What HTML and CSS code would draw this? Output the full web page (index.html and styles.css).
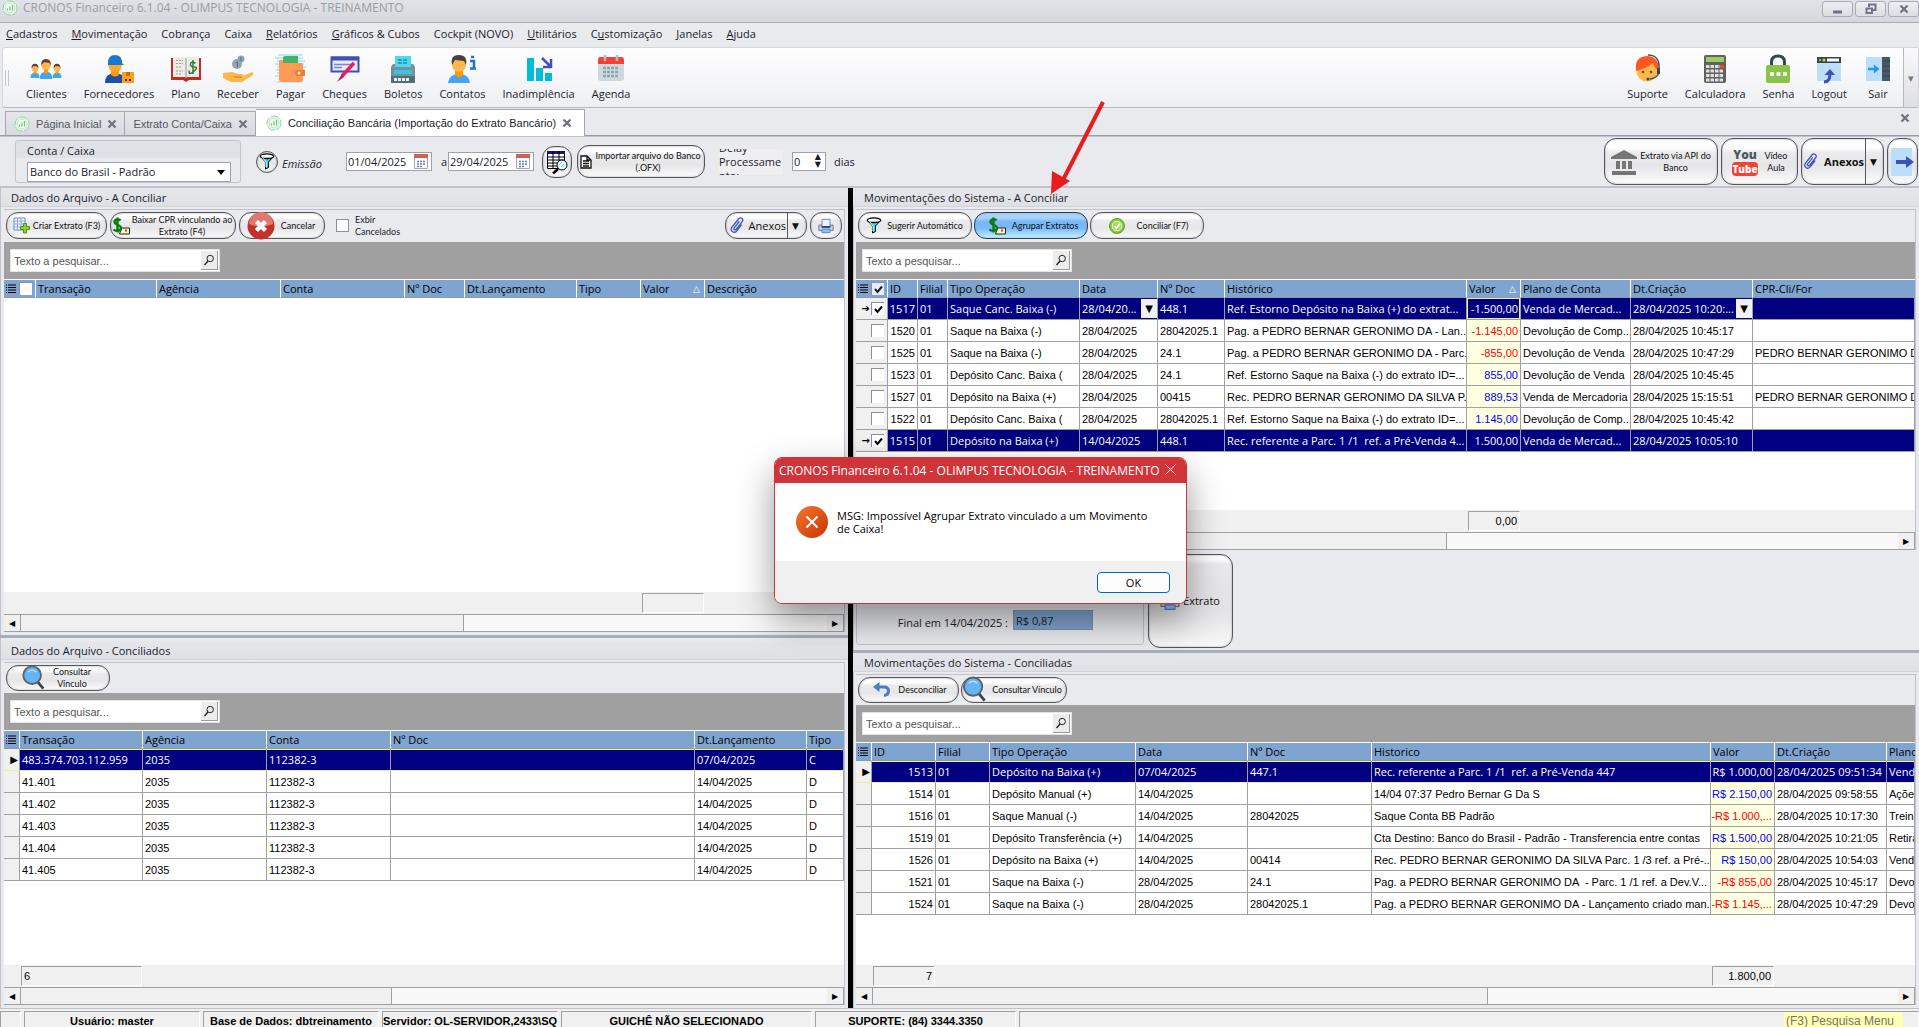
FILE: index.html
```
<!DOCTYPE html>
<html lang="pt-BR">
<head>
  <meta charset="UTF-8">
  <meta name="viewport" content="width=device-width, initial-scale=1.0">
  <title>CRONOS Financeiro 6.1.04 - OLIMPUS TECNOLOGIA - TREINAMENTO</title>
  <link rel="stylesheet" href="styles.css">
</head>
<body>
  <!-- shared icons -->
  <svg class="defs" width="0" height="0">
    <symbol id="logo" viewBox="0 0 16 16">
      <circle cx="8" cy="8" r="7" fill="#f2fbf3" stroke="#8fd49c" stroke-dasharray="9 1"/>
      <circle cx="8" cy="8" r="5" fill="none" stroke="#b9e4c1"/>
      <path d="M5.500 10.500v-2M8 10.500v-4M10.500 10.500V5" fill="none" stroke="#6cc47d" stroke-width="1.200"/>
    </symbol>
    <symbol id="lens" viewBox="0 0 12 12">
      <circle cx="7.200" cy="4.500" r="3.200" fill="none" stroke="#222"/>
      <path d="M5 7L1.500 11" stroke="#222" stroke-width="1.400"/>
    </symbol>
    <symbol id="cross" viewBox="0 0 10 10">
      <path d="M1.500 1.500l7 7M8.500 1.500l-7 7" stroke="#70717f" stroke-width="2.200"/>
    </symbol>
    <symbol id="bars" viewBox="0 0 10 10">
      <path d="M0 1h1M2 1h8M0 3.500h1M2 3.500h8M0 6h1M2 6h8M0 8.500h1M2 8.500h8" stroke="#000" stroke-width="1.200"/>
    </symbol>
    <symbol id="funnel" viewBox="0 0 16 18">
      <path d="M1.500 3.500L6.500 9v7l3-1.500V9l5-5.500z" fill="#20dfe8" stroke="#000"/>
      <ellipse cx="8" cy="3.200" rx="6.700" ry="2.300" fill="#fff" stroke="#000" stroke-width="1.300"/>
      <path d="M3.500 4.500L7 9v5" fill="none" stroke="#fff"/>
    </symbol>
    <symbol id="dollar" viewBox="0 0 18 18">
      <path d="M9.500 11h8v6h-10z" fill="#fff8c0" stroke="#222"/>
      <path d="M13 12.500h2v2h-2z" fill="#d33"/>
      <path d="M8.500 3.500C7 2 2.500 2 2.500 5s6.500 2.500 6.500 6-5.500 3.500-7.500 1.500M5.500.500v15" fill="none" stroke="#0a7a12" stroke-width="2.400"/>
    </symbol>
    <symbol id="clip" viewBox="0 0 16 18">
      <path d="M10.500 4.500L5 11.500c-1 1.500 1 3 2.200 1.500L13.500 5c2-2.800-1.800-5.600-4-2.900L2.500 11c-2.200 3.300 2 7 5 4l5.500-7" fill="none" stroke="#4356b8" stroke-width="1.400"/>
    </symbol>
    <symbol id="glass" viewBox="0 0 26 28">
      <path d="M16 17l7 8.500" stroke="#37474f" stroke-width="3"/>
      <circle cx="11" cy="11" r="9.500" fill="#64b5f6" stroke="#616161" stroke-width="2"/>
      <path d="M6.500 7.500q4.500-4 9 0" fill="none" stroke="#bbdefb" stroke-width="1.500"/>
    </symbol>
    <symbol id="calendar" viewBox="0 0 14 15">
      <path d="M.500.500h13v14H.500z" fill="#fff" stroke="#a0a6b8"/>
      <path d="M0 0h14v4H0z" fill="#d5604f"/>
      <path d="M3 7.500h8M3 10h8M3 12.500h5" stroke="#6677bb" stroke-width="1.500" stroke-dasharray="2 1"/>
    </symbol>
    <symbol id="printer" viewBox="0 0 18 18">
      <path d="M1 8h16v6H1z" fill="#c9d0de" stroke="#66708c"/>
      <path d="M4.500 1.500h9V10h-9z" fill="#eef4ff" stroke="#5c7cc0"/>
      <path d="M4 9h10v2H4z" fill="#33415f"/>
      <path d="M4.500 12.500h9v4h-9z" fill="#8fc0f5" stroke="#5c7cc0"/>
    </symbol>
    <symbol id="person" viewBox="0 0 12 20">
      <path d="M0 20q0-7 6-7t6 7z" fill="#42a5f5"/>
      <path d="M4 10h4v4q-2 2-4 0z" fill="#ff9800"/>
      <circle cx="6" cy="7" r="4.500" fill="#ffb74d"/>
      <path d="M1.500 7Q1 1 6 1t4.500 6L9 4.500 4 4z" fill="#5d4037"/>
    </symbol>
  </svg>

  <header class="title-bar">
    <svg class="logo"><use href="#logo"/></svg>
    <h1>CRONOS Financeiro 6.1.04 - OLIMPUS TECNOLOGIA - TREINAMENTO</h1>
    <div class="window-buttons">
      <button type="button" aria-label="Minimizar"><svg width="10" height="10"><path d="M0 8h9" stroke="#6f7389" stroke-width="3"/></svg></button>
      <button type="button" aria-label="Restaurar"><svg width="12" height="12"><path d="M4 4V1.500h6.500V7H8M1.500 5.500H7V10H1.500z" fill="none" stroke="#6f7389" stroke-width="2"/></svg></button>
      <button type="button" aria-label="Fechar"><svg width="10" height="10"><use href="#cross"/></svg></button>
    </div>
  </header>

  <nav class="menu">
    <a href="#"><u>C</u>adastros</a>
    <a href="#"><u>M</u>ovimentação</a>
    <a href="#">Cobrança</a>
    <a href="#">Caixa</a>
    <a href="#"><u>R</u>elatórios</a>
    <a href="#"><u>G</u>ráficos &amp; Cubos</a>
    <a href="#">Cockpit (NOVO)</a>
    <a href="#"><u>U</u>tilitários</a>
    <a href="#">C<u>u</u>stomização</a>
    <a href="#"><u>J</u>anelas</a>
    <a href="#"><u>A</u>juda</a>
  </nav>

  <div class="toolbar">
    <span class="grip"></span>
    <button type="button"><svg viewBox="0 0 34 30">
      <use href="#person" x="1" y="9" width="10" height="15"/><use href="#person" x="23" y="9" width="10" height="15"/>
      <use href="#person" x="9" y="4" width="16" height="21"/></svg>Clientes</button>
    <button type="button"><svg viewBox="0 0 34 30">
      <path d="M3 29q0-10 10-10t11 10z" fill="#1e4fa3"/><path d="M9 17h8v4q-4 3-8 0z" fill="#ff9800"/>
      <circle cx="13" cy="12" r="6.500" fill="#ffa726"/><path d="M6 9q0-8 7-8t7 8l2 2H6z" fill="#1976d2"/>
      <path d="M20 18h12v11H20z" fill="#f9a11b"/><path d="M24 18h4v4h-4z" fill="#c96c00"/><path d="M23 26h2m2 0h2" stroke="#333" stroke-width="2"/></svg>Fornecedores</button>
    <button type="button"><svg viewBox="0 0 34 30">
      <path d="M2 4h30v22H20l-3 2-3-2H2z" fill="#c62828"/><path d="M4 3h12l1 1 1-1h12v20H18l-1 1-1-1H4z" fill="#eeeae4"/>
      <path d="M17 4v20" stroke="#999"/><path d="M7 6.500h7M7 9.500h7M7 13h5M7 17h7M7 20h5" stroke="#9e9e9e" stroke-dasharray="2 1"/>
      <path d="M26.500 9q-4.500-2-5 1t4 3-1 4.500-4-1M24 6v14" fill="none" stroke="#2e7d32" stroke-width="1.500"/></svg>Plano</button>
    <button type="button"><svg viewBox="0 0 34 30">
      <circle cx="20" cy="5" r="3.500" fill="#90a4ae"/><circle cx="16" cy="10" r="5" fill="#90a4ae"/><path d="M15 8.500l1.500-.5v5M20 3v4" stroke="#546e7a" fill="none"/>
      <path d="M2 19l9-1 6 2h4q2 0 1 2l9-4q2 1 1 3l-11 7H10L2 24z" fill="#ffb74d"/><path d="M13 23h8" stroke="#ef8b1c" stroke-width="1.500"/></svg>Receber</button>
    <button type="button"><svg viewBox="0 0 34 30">
      <path d="M4 1h24M1 4h28M3 7h28M1 10h29M3 13h29M2 16h29M3 19h28M1 22h28M4 25h25M3 28h25" stroke="#bdeaf8" stroke-width="2"/>
      <path d="M9 4q0-2 2-2h13v9H9z" fill="#43b36b"/><path d="M5 7q1-2 4-1v3h18q2 0 2 2v15q0 2-2 2H8q-3 0-3-3z" fill="#ff9a56"/>
      <path d="M22 16h9v6h-9q-2-3 0-6z" fill="#ef7a3a"/><circle cx="25" cy="19" r="1.500" fill="#fff0d0"/></svg>Pagar</button>
    <button type="button"><svg viewBox="0 0 34 30">
      <path d="M3.500 3.500h27v14h-27z" fill="#e8eaf6" stroke="#3f51b5" stroke-width="2"/><path d="M3 2.500h28v4H3z" fill="#3f51b5"/>
      <path d="M6 10.500h20M6 13.500h8" stroke="#7986cb" stroke-width="1.500"/><path d="M26 9l-12 13" stroke="#e91e63" stroke-width="3.500"/><path d="M14 20l-5 8 7-5z" fill="#c2185b"/></svg>Cheques</button>
    <button type="button"><svg viewBox="0 0 34 30">
      <path d="M9 2h16v12H9z" fill="#4dd8f0"/><path d="M12 6h9M12 9h9" stroke="#1594ab" stroke-width="1.500" stroke-dasharray="4 1"/>
      <path d="M5 13l2-3h2v3h16v-3h2l2 3v16H5z" fill="#78909c"/><path d="M8 16h18v4H8z" fill="#35c5e6"/><path d="M5 22h24v7H5z" fill="#546e7a"/>
      <path d="M8 25.500h15" stroke="#eee" stroke-width="3" stroke-dasharray="3 1"/><path d="M24 24h3v3h-3z" fill="#1b8a3c"/></svg>Boletos</button>
    <button type="button"><svg viewBox="0 0 34 30">
      <path d="M3 29q1-9 11-9t11 9z" fill="#42a5f5"/><path d="M10 17h8v4l-4 3-4-3z" fill="#ff9800"/><circle cx="14" cy="11" r="7" fill="#ffb74d"/>
      <path d="M7 11Q5 1 13 1q10-1 8 10l-2-4-9-1z" fill="#424242"/><path d="M26 3h3M25 7h4v7M25 14.500h6" fill="none" stroke="#1976d2" stroke-width="2.500"/></svg>Contatos</button>
    <button type="button"><svg viewBox="0 0 34 30">
      <path d="M5 4h7v23H5zM14 14h7v13h-7zM23 19h7v8h-7z" fill="#00bcd4"/><path d="M20 4l8 8M29 5v8h-8" fill="none" stroke="#3f51b5" stroke-width="2.500"/></svg>Inadimplência</button>
    <button type="button"><svg viewBox="0 0 34 30">
      <path d="M4 6q0-3 3-3h20q3 0 3 3v18q0 3-3 3H7q-3 0-3-3z" fill="#cfd8dc"/><path d="M4 10V6q0-3 3-3h20q3 0 3 3v4z" fill="#f44336"/>
      <path d="M11 1v6M23 1v6" stroke="#b0bec5" stroke-width="2.500"/><path d="M9 14h16M9 18h16M9 22h16" stroke="#90a4ae" stroke-width="2.500" stroke-dasharray="3 1"/></svg>Agenda</button>

    <div class="toolbar-right">
      <button type="button"><svg viewBox="0 0 34 30">
        <circle cx="16" cy="17" r="10.500" fill="#ffb74d"/><path d="M5 17Q3 2 17 2q11 1 11 14-4-1-6-7-6 5-17 8z" fill="#ff5722"/><path d="M17 1q12 0 11 14v4q-2 5-9 6" fill="none" stroke="#455a64" stroke-width="1.500"/>
        <path d="M26 14h3v6h-3z" fill="#37474f"/><circle cx="12" cy="18" r="1.300" fill="#784719"/><circle cx="20" cy="18" r="1.300" fill="#784719"/><circle cx="17" cy="25" r="1.500" fill="#37474f"/></svg>Suporte</button>
      <button type="button"><svg viewBox="0 0 34 30">
        <path d="M8 1h18q2 0 2 2v24q0 2-2 2H8q-2 0-2-2V3q0-2 2-2z" fill="#616161"/><path d="M8 3h18v5H8z" fill="#9ccc65"/>
        <path d="M8 12.500h18M8 17h18M8 21.500h18M8 26h18" stroke="#e0e0e0" stroke-width="3" stroke-dasharray="3.500 1"/><path d="M22 11h4v3h-4z" fill="#f44336"/></svg>Calculadora</button>
      <button type="button"><svg viewBox="0 0 34 30">
        <path d="M10.500 12V8q0-6 6.500-6t6.500 6v4" fill="none" stroke="#37474f" stroke-width="3"/><rect x="5" y="11" width="24" height="18" rx="2" fill="#8bc34a"/>
        <path d="M9 20h4m2.500 0h4m2.500 0h4" stroke="#fff" stroke-width="3.500"/></svg>Senha</button>
      <button type="button"><svg viewBox="0 0 34 30">
        <path d="M5 3h24v24H5z" fill="#bbdefb"/><path d="M5 3h24v6H5z" fill="#37474f"/><path d="M15 4.500h12v3H15z" fill="#fff"/><circle cx="8" cy="6" r="1.200" fill="#8bc34a"/><circle cx="12" cy="6" r="1.500" fill="#ffca28"/>
        <path d="M12 28q6 0 6-8" fill="none" stroke="#3f51b5" stroke-width="3"/><path d="M12.500 21L18 15l5 6z" fill="#3f51b5"/></svg>Logout</button>
      <button type="button"><svg viewBox="0 0 34 30">
        <path d="M5 3h16v24H5z" fill="#bbdefb"/><path d="M21 3h8v24h-8z" fill="#455a64"/><path d="M21 7h8m-8 5h8m-8 5h8m-8 5h8" stroke="#37474f"/>
        <path d="M7 15h9" stroke="#2196f3" stroke-width="2.500"/><path d="M13 10.500l5.500 4.500-5.500 4.500z" fill="#2196f3"/></svg>Sair</button>
      <button type="button" class="toolbar-more" aria-label="Mais">▾</button>
    </div>
  </div>

  <div class="tabs">
    <div class="tab"><svg class="logo"><use href="#logo"/></svg><a href="#">Página Inicial</a><button type="button" aria-label="Fechar aba"><svg width="10" height="10"><use href="#cross"/></svg></button></div>
    <div class="tab"><a href="#">Extrato Conta/Caixa</a><button type="button" aria-label="Fechar aba"><svg width="10" height="10"><use href="#cross"/></svg></button></div>
    <div class="tab active"><svg class="logo"><use href="#logo"/></svg><a href="#">Conciliação Bancária (Importação do Extrato Bancário)</a><button type="button" aria-label="Fechar aba"><svg width="10" height="10"><use href="#cross"/></svg></button></div>
    <button type="button" class="close-all" aria-label="Fechar todas"><svg width="10" height="10"><use href="#cross"/></svg></button>
  </div>

  <section class="filters">
    <div class="account">
      <label for="conta">Conta / Caixa</label>
      <select id="conta"><option>Banco do Brasil - Padrão</option></select>
    </div>
    <button type="button" class="glossy round" aria-label="Filtrar"><svg width="16" height="18"><use href="#funnel"/></svg></button>
    <label class="emissao" for="inicio">Emissão</label>
    <div class="date"><input type="text" id="inicio" value="01/04/2025"><svg width="14" height="15"><use href="#calendar"/></svg></div>
    <label class="until" for="fim">a</label>
    <div class="date"><input type="text" id="fim" value="29/04/2025"><svg width="14" height="15"><use href="#calendar"/></svg></div>
    <button type="button" class="glossy lookup" aria-label="Consultar">
      <svg width="22" height="24" viewBox="0 0 22 24"><path d="M1.500 1.500h17v17h-17z" fill="#fff" stroke="#000"/><path d="M1 1h18v3H1z" fill="#15158a"/><path d="M1 7h18M1 10h18M1 13h18M1 16h18M7 1v18M13 1v18" stroke="#000"/><path d="M12 19l-5 4.500" stroke="#000" stroke-width="2.500"/><circle cx="16" cy="15" r="5" fill="#e6fbff" stroke="#000"/><path d="M13 15l3-3M15 17l3-3" stroke="#57d6e6"/></svg>
    </button>
    <button type="button" class="glossy import">
      <svg width="12" height="14" viewBox="0 0 12 14"><path d="M1 1h6l4 4v8H1zM7 1v4h4M3 6h6M3 8.500h6M3 11h6" fill="#fff" stroke="#111" stroke-width="1.300"/></svg>
      <span>Importar arquivo do Banco<br>(.OFX)</span>
    </button>
    <label class="delay" for="delay"><span>Delay Processame nto:</span></label>
    <div class="spin"><input type="text" id="delay" value="0"><span><button type="button" aria-label="Mais">▲</button><button type="button" aria-label="Menos">▼</button></span></div>
    <span class="days">dias</span>

    <div class="filters-right">
      <button type="button" class="glossy big bank">
        <svg width="26" height="26" viewBox="0 0 26 26"><path d="M0 8L13 1l13 7v2H0zM5 12h4v8H5zM11 12h4v8h-4zM17 12h4v8h-4zM1 22h24v4H1z" fill="#757575"/></svg>
        <span>Extrato via API do<br>Banco</span>
      </button>
      <button type="button" class="glossy big video">
        <span class="youtube"><b>You</b><b class="tube">Tube</b></span>
        <span>Vídeo<br>Aula</span>
      </button>
      <button type="button" class="glossy big attach strong"><svg width="15" height="17"><use href="#clip"/></svg><span>Anexos</span><i>▼</i></button>
      <button type="button" class="glossy big exit" aria-label="Sair">
        <svg width="26" height="28" viewBox="0 0 26 28"><path d="M1 0h21v28H1z" fill="#bbdefb"/><path d="M6 14h11" stroke="#3f51b5" stroke-width="4"/><path d="M16 8l8 6-8 6z" fill="#3f51b5"/></svg>
      </button>
    </div>
  </section>

  <main class="workspace">
    <div class="side left">
      <section class="panel">
        <h2>Dados do Arquivo - A Conciliar</h2>
        <div class="box">
          <div class="actions">
            <button type="button" class="glossy w-101"><svg width="17" height="17" viewBox="0 0 17 17"><path d="M1 1h11v12H1z" fill="#f6f9ff" stroke="#6a86c0"/><path d="M1 4h11M1 7h11M1 10h11M4.500 1v12M8 1v12" stroke="#8ba6d8"/><path d="M10.500 6.500h3v3h3v3h-3v3.500h-3v-3.500h-3v-3h3z" fill="#8ccf3c" stroke="#4f9413"/></svg><span>Criar Extrato (F3)</span></button>
            <button type="button" class="glossy w-126"><svg width="18" height="18"><use href="#dollar"/></svg><span>Baixar CPR vinculando ao<br>Extrato (F4)</span></button>
            <button type="button" class="glossy w-86"><svg width="28" height="28" viewBox="0 0 28 28"><circle cx="14" cy="14" r="13.500" fill="#c5302a"/><path d="M2 12a12 12 0 0 1 24 0q-12 5-24 0z" fill="#e0786f"/><path d="M9.500 9.500l9 9M18.500 9.500l-9 9" stroke="#fff" stroke-width="4.500"/></svg><span>Cancelar</span></button>
            <label class="show-cancelled"><input type="checkbox"><span>Exbir Cancelados</span></label>
            <button type="button" class="glossy attach push"><svg width="16" height="17"><use href="#clip"/></svg><span>Anexos</span><i>▼</i></button>
            <button type="button" class="glossy w-32" aria-label="Imprimir"><svg width="16" height="16"><use href="#printer"/></svg></button>
          </div>
          <div class="search-bar"><div class="search"><input type="text" placeholder="Texto a pesquisar..." aria-label="Texto a pesquisar"><button type="button" aria-label="Pesquisar"><svg width="12" height="12"><use href="#lens"/></svg></button></div></div>
          <div class="grid-body">
            <table>
              <colgroup><col class="c-32"><col class="c-121"><col class="c-124"><col class="c-124"><col class="c-60"><col class="c-112"><col class="c-64"><col class="c-64"><col></colgroup>
              <thead>
                <tr><th class="ind"><svg width="10" height="10"><use href="#bars"/></svg><input type="checkbox" aria-label="Todos"></th><th>Transação</th><th>Agência</th><th>Conta</th><th>Nº Doc</th><th>Dt.Lançamento</th><th>Tipo</th><th>Valor<em>△</em></th><th>Descrição</th></tr>
              </thead>
            </table>
          </div>
          <table class="totals">
            <colgroup><col class="c-32"><col class="c-121"><col class="c-124"><col class="c-124"><col class="c-60"><col class="c-112"><col class="c-64"><col class="c-64"><col></colgroup>
            <tr><td colspan="7"></td><td><span></span></td><td></td></tr>
          </table>
          <div class="scroll"><button type="button" aria-label="Esquerda">◀</button><div class="track"><div class="thumb" style="width: 55%"></div></div><button type="button" aria-label="Direita">▶</button></div>
        </div>
      </section>

      <section class="panel lower">
        <h2>Dados do Arquivo - Conciliados</h2>
        <div class="box">
          <div class="actions short">
            <button type="button" class="glossy w-104"><svg width="26" height="26"><use href="#glass"/></svg><span>Consultar<br>Vínculo</span></button>
          </div>
          <div class="search-bar"><div class="search"><input type="text" placeholder="Texto a pesquisar..." aria-label="Texto a pesquisar"><button type="button" aria-label="Pesquisar"><svg width="12" height="12"><use href="#lens"/></svg></button></div></div>
          <div class="grid-body">
            <table>
              <colgroup><col class="c-16"><col class="c-123"><col class="c-124"><col class="c-124"><col class="c-304"><col class="c-112"><col></colgroup>
              <thead>
                <tr><th class="ind"><svg width="10" height="10"><use href="#bars"/></svg></th><th>Transação</th><th>Agência</th><th>Conta</th><th>Nº Doc</th><th>Dt.Lançamento</th><th>Tipo</th></tr>
              </thead>
              <tbody>
                <tr class="current"><td class="ind">▶</td><td>483.374.703.112.959</td><td>2035</td><td>112382-3</td><td></td><td>07/04/2025</td><td>C</td></tr>
                <tr><td class="ind"></td><td>41.401</td><td>2035</td><td>112382-3</td><td></td><td>14/04/2025</td><td>D</td></tr>
                <tr><td class="ind"></td><td>41.402</td><td>2035</td><td>112382-3</td><td></td><td>14/04/2025</td><td>D</td></tr>
                <tr><td class="ind"></td><td>41.403</td><td>2035</td><td>112382-3</td><td></td><td>14/04/2025</td><td>D</td></tr>
                <tr><td class="ind"></td><td>41.404</td><td>2035</td><td>112382-3</td><td></td><td>14/04/2025</td><td>D</td></tr>
                <tr><td class="ind"></td><td>41.405</td><td>2035</td><td>112382-3</td><td></td><td>14/04/2025</td><td>D</td></tr>
              </tbody>
            </table>
          </div>
          <table class="totals">
            <colgroup><col class="c-16"><col class="c-123"><col></colgroup>
            <tr><td></td><td><span>6</span></td><td></td></tr>
          </table>
          <div class="scroll"><button type="button" aria-label="Esquerda">◀</button><div class="track"><div class="thumb" style="width: 46%"></div></div><button type="button" aria-label="Direita">▶</button></div>
        </div>
      </section>
    </div>

    <div class="divider"></div>

    <div class="side right">
      <section class="panel">
        <h2>Movimentações do Sistema - A Conciliar</h2>
        <div class="box">
          <div class="actions">
            <button type="button" class="glossy w-114 auto"><svg width="16" height="18"><use href="#funnel"/></svg><span>Sugerir Automático</span></button>
            <button type="button" class="glossy w-114 selected"><svg width="18" height="18"><use href="#dollar"/></svg><span>Agrupar Extratos</span></button>
            <button type="button" class="glossy w-114 inset"><svg width="16" height="16" viewBox="0 0 16 16"><circle cx="8" cy="8" r="7.500" fill="#8cc63f" stroke="#5f9c20"/><circle cx="8" cy="8" r="4.800" fill="#a8d85f" stroke="#e8f7cf"/><path d="M5.500 8l2 2.300 3.500-4.800" fill="none" stroke="#fff" stroke-width="1.800"/></svg><span>Conciliar (F7)</span></button>
          </div>
          <div class="search-bar"><div class="search"><input type="text" placeholder="Texto a pesquisar..." aria-label="Texto a pesquisar"><button type="button" aria-label="Pesquisar"><svg width="12" height="12"><use href="#lens"/></svg></button></div></div>
          <div class="grid-body">
            <table>
              <colgroup><col class="c-32"><col class="c-30"><col class="c-30"><col class="c-132"><col class="c-78"><col class="c-67"><col class="c-242"><col class="c-54"><col class="c-110"><col class="c-122"><col></colgroup>
              <thead>
                <tr><th class="ind"><svg width="10" height="10"><use href="#bars"/></svg><input type="checkbox" class="dim" checked aria-label="Todos"></th><th>ID</th><th>Filial</th><th>Tipo Operação</th><th>Data</th><th>Nº Doc</th><th>Histórico</th><th>Valor<em>△</em></th><th>Plano de Conta</th><th>Dt.Criação</th><th>CPR-Cli/For</th></tr>
              </thead>
              <tbody>
                <tr class="marked"><td class="ind"><b>➔</b><input type="checkbox" checked aria-label="1517"></td><td class="num">1517</td><td>01</td><td>Saque Canc. Baixa (-)</td><td class="combo"><div>28/04/20...<button type="button" aria-label="Abrir">▼</button></div></td><td>448.1</td><td>Ref. Estorno Depósito na Baixa (+) do extrat...</td><td class="num focus">-1.500,00</td><td>Venda de Mercad...</td><td class="combo"><div>28/04/2025 10:20:...<button type="button" aria-label="Abrir">▼</button></div></td><td></td></tr>
                <tr><td class="ind"><input type="checkbox" aria-label="1520"></td><td class="num">1520</td><td>01</td><td>Saque na Baixa (-)</td><td>28/04/2025</td><td>28042025.1</td><td>Pag. a PEDRO BERNAR GERONIMO DA - Lan...</td><td class="num value neg">-1.145,00</td><td>Devolução de Comp...</td><td>28/04/2025 10:45:17</td><td></td></tr>
                <tr><td class="ind"><input type="checkbox" aria-label="1525"></td><td class="num">1525</td><td>01</td><td>Saque na Baixa (-)</td><td>28/04/2025</td><td>24.1</td><td>Pag. a PEDRO BERNAR GERONIMO DA - Parc...</td><td class="num value neg">-855,00</td><td>Devolução de Venda</td><td>28/04/2025 10:47:29</td><td>PEDRO BERNAR GERONIMO DA S</td></tr>
                <tr><td class="ind"><input type="checkbox" aria-label="1523"></td><td class="num">1523</td><td>01</td><td>Depósito Canc. Baixa (</td><td>28/04/2025</td><td>24.1</td><td>Ref. Estorno Saque na Baixa (-) do extrato ID=...</td><td class="num value">855,00</td><td>Devolução de Venda</td><td>28/04/2025 10:45:45</td><td></td></tr>
                <tr><td class="ind"><input type="checkbox" aria-label="1527"></td><td class="num">1527</td><td>01</td><td>Depósito na Baixa (+)</td><td>28/04/2025</td><td>00415</td><td>Rec. PEDRO BERNAR GERONIMO DA SILVA P...</td><td class="num value">889,53</td><td>Venda de Mercadoria</td><td>28/04/2025 15:15:51</td><td>PEDRO BERNAR GERONIMO DA S</td></tr>
                <tr><td class="ind"><input type="checkbox" aria-label="1522"></td><td class="num">1522</td><td>01</td><td>Depósito Canc. Baixa (</td><td>28/04/2025</td><td>28042025.1</td><td>Ref. Estorno Saque na Baixa (-) do extrato ID=...</td><td class="num value">1.145,00</td><td>Devolução de Comp...</td><td>28/04/2025 10:45:42</td><td></td></tr>
                <tr class="marked"><td class="ind"><b>→</b><input type="checkbox" checked aria-label="1515"></td><td class="num">1515</td><td>01</td><td>Depósito na Baixa (+)</td><td>14/04/2025</td><td>448.1</td><td>Rec. referente a Parc. 1 /1  ref. a Pré-Venda 4...</td><td class="num">1.500,00</td><td>Venda de Mercad...</td><td>28/04/2025 10:05:10</td><td></td></tr>
              </tbody>
            </table>
          </div>
          <table class="totals">
            <colgroup><col class="c-32"><col class="c-30"><col class="c-30"><col class="c-132"><col class="c-78"><col class="c-67"><col class="c-242"><col class="c-54"><col></colgroup>
            <tr><td colspan="7"></td><td class="num"><span>0,00</span></td><td></td></tr>
          </table>
          <div class="scroll"><button type="button" aria-label="Esquerda">◀</button><div class="track"><div class="thumb" style="width: 56%"></div></div><button type="button" aria-label="Direita">▶</button></div>
        </div>
        <div class="balance">
          <div class="balance-box">
            <label for="saldo">Final em 14/04/2025 :</label>
            <input type="text" id="saldo" value="R$ 0,87" readonly>
          </div>
          <button type="button" class="glossy"><svg width="22" height="20"><use href="#printer"/></svg><span>Extrato</span></button>
        </div>
      </section>

      <section class="panel">
        <h2>Movimentações do Sistema - Conciliadas</h2>
        <div class="box">
          <div class="actions short">
            <button type="button" class="glossy w-101 undo"><svg width="18" height="16" viewBox="0 0 18 16"><path d="M6 5h6q4.500 0 4.500 4T12 13.500" fill="none" stroke="#4a7ebf" stroke-width="3"/><path d="M7.500 0v10L1 5z" fill="#4a7ebf"/></svg><span>Desconciliar</span></button>
            <button type="button" class="glossy w-106"><svg width="26" height="27"><use href="#glass"/></svg><span>Consultar Vínculo</span></button>
          </div>
          <div class="search-bar"><div class="search"><input type="text" placeholder="Texto a pesquisar..." aria-label="Texto a pesquisar"><button type="button" aria-label="Pesquisar"><svg width="12" height="12"><use href="#lens"/></svg></button></div></div>
          <div class="grid-body">
            <table>
              <colgroup><col class="c-16"><col class="c-64"><col class="c-54"><col class="c-146"><col class="c-112"><col class="c-124"><col class="c-339"><col class="c-64"><col class="c-112"><col></colgroup>
              <thead>
                <tr><th class="ind"><svg width="10" height="10"><use href="#bars"/></svg></th><th>ID</th><th>Filial</th><th>Tipo Operação</th><th>Data</th><th>Nº Doc</th><th>Historico</th><th>Valor</th><th>Dt.Criação</th><th>Plano</th></tr>
              </thead>
              <tbody>
                <tr class="current"><td class="ind">▶</td><td class="num">1513</td><td>01</td><td>Depósito na Baixa (+)</td><td>07/04/2025</td><td>447.1</td><td>Rec. referente a Parc. 1 /1  ref. a Pré-Venda 447</td><td class="num">R$ 1.000,00</td><td>28/04/2025 09:51:34</td><td>Vend</td></tr>
                <tr><td class="ind"></td><td class="num">1514</td><td>01</td><td>Depósito Manual (+)</td><td>14/04/2025</td><td></td><td>14/04 07:37 Pedro Bernar G Da S</td><td class="num value">R$ 2.150,00</td><td>28/04/2025 09:58:55</td><td>Ações</td></tr>
                <tr><td class="ind"></td><td class="num">1516</td><td>01</td><td>Saque Manual (-)</td><td>14/04/2025</td><td>28042025</td><td>Saque Conta BB Padrão</td><td class="num value neg">-R$ 1.000,...</td><td>28/04/2025 10:17:30</td><td>Treina</td></tr>
                <tr><td class="ind"></td><td class="num">1519</td><td>01</td><td>Depósito Transferência (+)</td><td>14/04/2025</td><td></td><td>Cta Destino: Banco do Brasil - Padrão - Transferencia entre contas</td><td class="num value">R$ 1.500,00</td><td>28/04/2025 10:21:05</td><td>Retira</td></tr>
                <tr><td class="ind"></td><td class="num">1526</td><td>01</td><td>Depósito na Baixa (+)</td><td>14/04/2025</td><td>00414</td><td>Rec. PEDRO BERNAR GERONIMO DA SILVA Parc. 1 /3 ref. a Pré-...</td><td class="num value">R$ 150,00</td><td>28/04/2025 10:54:03</td><td>Venda</td></tr>
                <tr><td class="ind"></td><td class="num">1521</td><td>01</td><td>Saque na Baixa (-)</td><td>28/04/2025</td><td>24.1</td><td>Pag. a PEDRO BERNAR GERONIMO DA  - Parc. 1 /1 ref. a Dev.V...</td><td class="num value neg">-R$ 855,00</td><td>28/04/2025 10:45:17</td><td>Devol</td></tr>
                <tr><td class="ind"></td><td class="num">1524</td><td>01</td><td>Saque na Baixa (-)</td><td>28/04/2025</td><td>28042025.1</td><td>Pag. a PEDRO BERNAR GERONIMO DA - Lançamento criado man...</td><td class="num value neg">-R$ 1.145,...</td><td>28/04/2025 10:47:29</td><td>Devol</td></tr>
              </tbody>
            </table>
          </div>
          <table class="totals">
            <colgroup><col class="c-16"><col class="c-64"><col class="c-54"><col class="c-146"><col class="c-112"><col class="c-124"><col class="c-339"><col class="c-64"><col></colgroup>
            <tr><td></td><td class="num"><span>7</span></td><td colspan="5"></td><td class="num"><span>1.800,00</span></td><td></td></tr>
          </table>
          <div class="scroll"><button type="button" aria-label="Esquerda">◀</button><div class="track"><div class="thumb" style="width: 60%"></div></div><button type="button" aria-label="Direita">▶</button></div>
        </div>
      </section>
    </div>
  </main>

  <footer class="status">
    <span></span>
    <span>Usuário: master</span>
    <span>Base de Dados: dbtreinamento</span>
    <span>Servidor: OL-SERVIDOR,2433\SQ</span>
    <span>GUICHÊ NÃO SELECIONADO</span>
    <span>SUPORTE: (84) 3344.3350</span>
    <span class="hint-cell"><mark>(F3) Pesquisa Menu</mark></span>
  </footer>

  <dialog class="message" open>
    <div class="message-title"><span>CRONOS Financeiro 6.1.04 - OLIMPUS TECNOLOGIA - TREINAMENTO</span>
      <button type="button" aria-label="Fechar"><svg width="11" height="11"><path d="M.500.500l10 10M10.500.500l-10 10" stroke="#fff"/></svg></button></div>
    <div class="message-body">
      <svg width="32" height="32" viewBox="0 0 32 32">
        <defs><linearGradient id="err" x1="0" y1="0" x2="1" y2="1"><stop offset="0" stop-color="#f4762e"/><stop offset="1" stop-color="#c93303"/></linearGradient></defs>
        <circle cx="16" cy="16" r="16" fill="url(#err)"/><path d="M10.500 10.500l11 11M21.500 10.500l-11 11" stroke="#fff" stroke-width="2"/></svg>
      <p>MSG: Impossível Agrupar Extrato vinculado a um Movimento de Caixa!</p>
    </div>
    <div class="message-footer"><button type="button">OK</button></div>
  </dialog>

  <svg class="arrow" width="56" height="98" viewBox="0 0 56 98">
    <path d="M53 2L13 80" stroke="#e81b1f" stroke-width="4"/>
    <path d="M2 71l18 10L1 94z" fill="#e81b1f"/>
  </svg>
</body>
</html>
```
FILE: styles.css
```
* {
    box-sizing: border-box;
}

body {
    margin: 0;
    height: 100vh;
    overflow: hidden;
    display: flex;
    flex-direction: column;
    background: #e9eaee;
    color: #1b1b2b;
    font: 11px/14px "Open Sans", sans-serif;
}

button,
input,
select {
    font: inherit;
    color: inherit;
    margin: 0;
    padding: 0;
}

button {
    border: none;
    background: none;
}

a {
    color: inherit;
    text-decoration: none;
}

svg {
    flex: none;
}

.defs {
    position: absolute;
}

.logo {
    width: 16px;
    height: 16px;
}

/* title bar and menu */
.title-bar {
    display: flex;
    align-items: flex-start;
    gap: 5px;
    height: 23px;
    padding-left: 2px;
    background: linear-gradient(#e2e3e8, #d5d7dd);
    border-bottom: 1px solid #a9abb8;
}

.title-bar h1 {
    margin: 0;
    font-size: 12px;
    line-height: 16px;
    font-weight: normal;
    color: #9a9ca8;
}

.window-buttons {
    display: flex;
    gap: 2px;
    margin-left: auto;
    padding-top: 1px;
}

.window-buttons button {
    display: flex;
    align-items: center;
    justify-content: center;
    width: 31px;
    height: 16px;
    border: 1px solid #a9abb8;
    border-radius: 3px;
    background: linear-gradient(#eeeff2, #dcdde2);
}

.menu {
    display: flex;
    align-items: center;
    gap: 14px;
    height: 24px;
    padding: 0 0 2px 6px;
}

/* main toolbar */
.toolbar {
    display: flex;
    gap: 17px;
    height: 61px;
    margin-left: 2px;
    background: linear-gradient(#fefefe, #eeeff3);
    border: 1px solid #d5d6db;
    border-bottom-color: #b6b8c2;
    border-radius: 3px;
}

.toolbar button {
    display: flex;
    flex-direction: column;
    align-items: center;
    padding-top: 6px;
    gap: 3px;
}

.toolbar svg {
    width: 34px;
    height: 30px;
    margin: 0 -3px;
}

.grip {
    width: 4px;
    height: 16px;
    margin: 22px 0 0 2px;
    border: 1px solid #c5c6cd;
    border-width: 0 1px;
}

.toolbar-right {
    display: flex;
    gap: 17px;
    margin-left: auto;
}

.toolbar .toolbar-more {
    width: 15px;
    justify-content: center;
    padding: 0;
    margin-left: -6px;
    border-left: 1px solid #b6b8c2;
    background: linear-gradient(#fafafb, #dddee4);
    color: #777;
}

/* document tabs */
.tabs {
    display: flex;
    align-items: flex-end;
    height: 28px;
    padding-left: 5px;
    border-bottom: 1px solid #9b9ca8;
    font-family: "Liberation Sans", Arial, sans-serif;
}

.tab {
    display: flex;
    align-items: center;
    gap: 6px;
    height: 24px;
    padding: 0 7px 0 8px;
    border: 1px solid #a5a6b2;
    border-bottom: none;
    background: linear-gradient(#e6e7eb, #d9dadf);
    color: #55565f;
}

.tab + .tab {
    border-left: none;
}

.tab.active {
    height: 27px;
    padding-left: 10px;
    padding-right: 12px;
    margin-bottom: -1px;
    background: #fff;
    color: #1b1b2b;
}

.tab button,
.close-all {
    display: flex;
}

.close-all {
    margin: 0 9px 12px auto;
}

/* filter strip */
.filters {
    display: flex;
    align-items: center;
    height: 52px;
    padding: 2px 0 2px 15px;
    border-top: 1px solid #c0c1ca;
    border-bottom: 2px solid #c0c1ca;
}

.account {
    width: 226px;
    height: 43px;
    border: 1px solid #c3c4cd;
    border-radius: 3px;
    background: linear-gradient(#e0e1e6, #e0e1e6) 0 0 / 100% 17px no-repeat;
    margin-right: 15px;
}

.account label {
    display: block;
    padding: 3px 11px;
    height: 20px;
}

.account select {
    display: block;
    width: 204px;
    height: 20px;
    margin: 1px 0 0 11px;
    padding: 0 2px;
    appearance: none;
    border: 1px solid #a0a1ad;
    border-radius: 0;
    background: #fff url("data:image/svg+xml,%3Csvg xmlns='http://www.w3.org/2000/svg' width='8' height='5'%3E%3Cpath d='M0 0h8L4 5z'/%3E%3C/svg%3E") right 5px center no-repeat;
}

.glossy {
    display: flex;
    align-items: center;
    flex: none;
    height: 27px;
    padding: 0 3px;
    border: 1px solid #55565c;
    border-radius: 12px;
    background: linear-gradient(#fdfdfd 20%, #ebebed 30%, #e6e6e8 60%, #fbfbfb);
    color: #111;
    font: 9px/12px Lato, sans-serif;
    white-space: nowrap;
    box-shadow: inset 0 0 2px #999;
}

.glossy span {
    flex: 1;
    text-align: center;
}

.glossy.round {
    width: 22px;
    height: 22px;
    padding: 2px;
    justify-content: center;
}

.emissao {
    width: 68px;
    padding: 4px 0 0 4px;
    font-style: italic;
}

.date {
    display: flex;
    align-items: center;
    width: 86px;
    height: 19px;
    padding: 0 3px 0 1px;
    border: 1px solid #a0a1ad;
    background: #fff;
}

.date input,
.spin input {
    flex: 1;
    width: 20px;
    border: none;
    background: none;
    outline: none;
}

.until {
    width: 16px;
    text-align: right;
    padding-right: 1px;
}

.glossy.lookup {
    width: 30px;
    height: 32px;
    margin: 0 5px 0 8px;
}

.glossy.import {
    width: 128px;
    height: 33px;
    padding: 0 0 0 2px;
    margin-right: 14px;
}

.delay {
    display: flex;
    align-items: center;
    width: 64px;
    height: 26px;
    margin-right: 9px;
    overflow: hidden;
    background: #efeff1;
}

.spin {
    display: flex;
    width: 34px;
    height: 19px;
    padding: 0 4px 0 1px;
    margin-right: 8px;
    border: 1px solid #a0a1ad;
    background: #fff;
}

.spin span {
    display: flex;
    flex-direction: column;
}

.spin span button {
    font: 8px/8px "DejaVu Sans", sans-serif;
}

.filters-right {
    display: flex;
    gap: 3px;
    margin-left: auto;
    padding-right: 1px;
}

.glossy.big {
    height: 47px;
}

.bank {
    width: 114px;
}

.glossy.bank {
    padding-left: 6px;
}

.video {
    width: 77px;
}

.glossy .youtube {
    flex: none;
    width: 26px;
    margin-left: 7px;
    font: bold 12px/14px "Open Sans", sans-serif;
    color: #455a64;
}

.youtube b {
    display: block;
}

.youtube .tube {
    border-radius: 4px;
    background: #f44336;
    color: #fff;
    font-size: 10px;
}

.glossy.attach {
    width: 82px;
    font: 11px/14px "Open Sans", sans-serif;
}

.glossy.attach span {
    text-align: right;
}

.glossy.strong {
    width: 83px;
    padding: 0 2px 0 1px;
    font-weight: bold;
}

.attach i {
    display: flex;
    align-items: center;
    align-self: stretch;
    margin-left: 1px;
    padding: 0 4px;
    border-left: 1px solid #55565c;
    font: 9px "DejaVu Sans", sans-serif;
}

.exit {
    width: 31px;
    justify-content: center;
}

/* four grids */
.workspace {
    flex: 1;
    min-height: 0;
    display: grid;
    grid-template-columns: 848fr 5px 1066fr;
}

.divider {
    background: #000;
}

.side {
    display: grid;
    gap: 3px;
    min-width: 0;
    min-height: 0;
    background: #abadb8;
}

.side.left {
    grid-template-rows: 447fr 370fr;
}

.side.right {
    grid-template-rows: 462fr 355fr;
}

.panel {
    display: flex;
    flex-direction: column;
    min-width: 0;
    min-height: 0;
    padding: 0 3px 3px;
    background: #e9eaee;
    border-left: 1px solid #c0c1ca;
}

.panel.lower {
    padding-top: 3px;
}

.right .panel {
    padding-left: 2px;
}

.panel h2 {
    margin: 0 -3px 2px;
    padding: 2px 10px;
    height: 19px;
    font-size: 11px;
    line-height: 15px;
    font-weight: normal;
    background: linear-gradient(#e6e7eb, #dfe0e5);
    border-bottom: 1px solid #d2d3d9;
}

.right h2 {
    padding-left: 11px;
}

.box {
    flex: 1;
    min-height: 0;
    display: flex;
    flex-direction: column;
    border-top: 1px solid #c0c1ca;
    border-right: 1px solid #c0c1ca;
}

.actions {
    display: flex;
    align-items: center;
    gap: 3px;
    height: 32px;
    padding: 0 2px 1px;
}

.actions.short {
    height: 30px;
}

.actions.short .glossy {
    height: 26px;
}

.right .actions {
    gap: 2px;
}

.actions .push {
    margin-left: auto;
}

.show-cancelled {
    display: flex;
    align-items: center;
    gap: 6px;
    width: 72px;
    margin-left: 8px;
    font: 9px/12px Lato, sans-serif;
}

input[type="checkbox"] {
    appearance: none;
    flex: none;
    width: 13px;
    height: 13px;
    border: 1px solid #8d8e99;
    background: #fff;
}

input[type="checkbox"]:checked {
    background: #fff url("data:image/svg+xml,%3Csvg xmlns='http://www.w3.org/2000/svg' width='11' height='11'%3E%3Cpath d='M2 5l2.500 3L9 2.500' fill='none' stroke='%23000' stroke-width='2'/%3E%3C/svg%3E") center no-repeat;
}

input.dim:checked {
    opacity: .8;
}

.w-32 { width: 32px; }
.w-86 { width: 86px; }
.w-101 { width: 101px; }
.w-104 { width: 104px; }
.w-106 { width: 106px; }
.w-114 { width: 114px; }
.w-126 { width: 126px; }

.w-32 {
    justify-content: center;
}

.glossy.w-101 {
    padding-left: 6px;
}

.glossy.w-104 {
    padding: 0 12px 0 14px;
}

.glossy.w-106 {
    padding: 0;
}

.glossy.w-126 {
    padding: 0 1px;
}

.glossy.w-86,
.glossy.auto {
    padding-left: 7px;
}

.glossy.selected,
.glossy.undo {
    padding-left: 13px;
}

.glossy.inset {
    padding-left: 18px;
}

.glossy.selected {
    background: linear-gradient(#a9d2fb 20%, #79b6f6 35%, #78b8fa 60%, #c6f2ff);
    border-color: #27415f;
}

.search-bar {
    height: 37px;
    padding: 7px 8px 0 6px;
    background: #a0a0a0;
}

.search {
    display: flex;
    width: 210px;
    height: 23px;
    padding: 1px;
    border: 1px solid #e4e4e4;
    background: #fff;
    font-family: "Liberation Sans", Arial, sans-serif;
}

.search input {
    flex: 1;
    min-width: 0;
    padding-left: 2px;
    border: none;
    outline: none;
}

.search input::placeholder {
    color: #555;
}

.search button {
    display: flex;
    align-items: center;
    justify-content: center;
    width: 17px;
    background: #ececec;
    border: 1px solid #9c9c9c;
    border-width: 0 1px 1px 0;
}

.grid-body {
    flex: 1;
    min-height: 0;
    overflow: hidden;
    background: #fff;
    border-top: 1px solid #fff;
}

table {
    width: 100%;
    table-layout: fixed;
    border-collapse: separate;
    border-spacing: 0;
}

/* column widths */
.c-16 { width: 16px; }
.c-30 { width: 30px; }
.c-32 { width: 32px; }
.c-54 { width: 54px; }
.c-60 { width: 60px; }
.c-64 { width: 64px; }
.c-67 { width: 67px; }
.c-78 { width: 78px; }
.c-110 { width: 110px; }
.c-112 { width: 112px; }
.c-121 { width: 121px; }
.c-122 { width: 122px; }
.c-123 { width: 123px; }
.c-124 { width: 124px; }
.c-132 { width: 132px; }
.c-146 { width: 146px; }
.c-242 { width: 242px; }
.c-304 { width: 304px; }
.c-339 { width: 339px; }

th {
    height: 18px;
    padding: 0 0 0 2px;
    overflow: hidden;
    text-align: left;
    font-weight: normal;
    white-space: nowrap;
    color: #000;
    background: #7fa4d0;
    border-right: 1px solid #fff;
    border-bottom: 1px solid #8d99a8;
}

th:last-child,
td:last-child {
    border-right: none;
}

th em {
    float: right;
    padding-right: 4px;
    font: 9px/14px "DejaVu Sans", sans-serif;
    color: #fff;
}

.grid-body td {
    height: 22px;
    padding: 0 0 0 2px;
    overflow: hidden;
    white-space: pre;
    font-family: "Liberation Sans", Arial, sans-serif;
    color: #000;
    border: 1px solid #a0a0a0;
    border-width: 0 1px 1px 0;
}

.grid-body td.num {
    padding: 0 2px 0 0;
    text-align: right;
}

.totals .num {
    text-align: right;
}

.grid-body .value {
    background: #ffffe1;
    color: #00f;
}

.grid-body .neg {
    color: #f00;
}

.grid-body .current td,
.grid-body .marked td {
    background: #000080;
    color: #fff;
    font-family: "Open Sans", sans-serif;
}

.grid-body .current td {
    border-bottom-color: #f4f08a;
    box-shadow: inset 0 1px #f4f08a;
}

.grid-body .marked .focus {
    box-shadow: inset 0 0 0 1px #f4f08a;
}

.grid-body tr td.ind,
.ind {
    padding: 0 1px;
    text-align: right;
    background: #f0f0f0;
    color: #000;
    font: 10px/12px "DejaVu Sans", sans-serif;
    box-shadow: none;
}

th.ind {
    background: #7fa4d0;
}

.ind svg {
    vertical-align: middle;
    margin-right: 2px;
}

.ind input[type="checkbox"] {
    vertical-align: middle;
    margin: 0 2px 0 1px;
    border-width: 1px 0 0 1px;
}

.combo div {
    display: flex;
    align-items: center;
    justify-content: space-between;
}

.combo button {
    flex: none;
    width: 16px;
    height: 19px;
    background: #f0f0f0;
    color: #000;
    font: 10px "DejaVu Sans", sans-serif;
}

.totals {
    flex: none;
    background: #f0f0f0;
}

.totals td {
    height: 22px;
    padding: 1px;
    color: #000;
    font-family: "Liberation Sans", Arial, sans-serif;
}

.totals span {
    display: block;
    height: 20px;
    padding: 2px;
    border: 1px solid #a0a0a0;
    border-color: #a0a0a0 #fff #fff #a0a0a0;
}

.scroll {
    display: flex;
    flex: none;
    height: 18px;
    border: 1px solid #a0a0a0;
    border-width: 1px 0;
}

.scroll button {
    width: 17px;
    background: #f0f0f0;
    border: 1px solid #a0a0a0;
    border-width: 0 1px 0 0;
    font: 8px "DejaVu Sans", sans-serif;
    color: #000;
}

.track {
    flex: 1;
    background: #f8f8f8;
}

.thumb {
    height: 16px;
    background: #f0f0f0;
    border-right: 1px solid #a0a0a0;
}

.balance {
    display: flex;
    align-items: flex-start;
    flex: none;
    gap: 4px;
    height: 100px;
    margin-bottom: -3px;
    padding-top: 4px;
}

.balance-box {
    display: flex;
    align-items: flex-end;
    gap: 5px;
    width: 288px;
    height: 91px;
    padding: 0 50px 14px 0;
    justify-content: flex-end;
    border: 1px solid #c0c1ca;
    border-radius: 3px;
}

.balance-box input {
    width: 80px;
    height: 20px;
    padding: 0 2px;
    border: 1px solid #8193a8;
    background: #7fa4d0;
}

.balance .glossy {
    width: 85px;
    height: 94px;
    padding: 0 10px;
    font: 11px/14px "Open Sans", sans-serif;
    background: linear-gradient(#fdfdfd 5%, #e9e9eb 10%, #e3e3e5 60%, #f8f8f8);
}

/* status bar */
.status {
    display: flex;
    flex: none;
    gap: 3px;
    height: 19px;
    padding-top: 2px;
    background: #f0f0f0;
    border-top: 1px solid #c0c1ca;
    font: bold 11px/18px "Liberation Sans", Arial, sans-serif;
    color: #000;
    text-align: center;
    white-space: nowrap;
}

.status span {
    width: 176px;
    border: 1px solid #a0a0a0;
    border-width: 1px 1px 0 1px;
    border-right-color: #fff;
}

.status span:first-child {
    width: 21px;
}

.status span:nth-child(5) {
    width: 251px;
}

.status span:nth-child(6) {
    width: 201px;
}

.status .hint-cell {
    flex: 1;
    width: auto;
    padding-right: 15px;
    text-align: right;
}

.status mark {
    display: inline-block;
    width: 119px;
    padding-left: 2px;
    text-align: left;
    font-weight: normal;
    font-size: 12px;
    background: #ffffb8;
    color: #77775a;
}

/* error message */
.message {
    position: absolute;
    left: 774px;
    top: 457px;
    width: 413px;
    margin: 0;
    padding: 0;
    overflow: hidden;
    border: 1px solid #d13438;
    border-radius: 8px;
    background: #fff;
    color: #000;
    box-shadow: 0 16px 36px rgba(0, 0, 0, .4);
}

.message-title {
    display: flex;
    align-items: center;
    justify-content: space-between;
    height: 25px;
    padding: 0 10px 0 4px;
    background: #d13438;
    color: #fff;
    font-size: 12px;
}

.message-body {
    display: flex;
    gap: 9px;
    height: 78px;
    padding: 23px 24px 0 21px;
}

.message-body p {
    margin: 3px 0 0;
    line-height: 13px;
}

.message-footer {
    display: flex;
    justify-content: flex-end;
    height: 42px;
    padding: 11px 16px 0 0;
    background: #f0f0f0;
}

.message-footer button {
    width: 73px;
    height: 21px;
    border: 1px solid #0067c0;
    border-radius: 4px;
    background: #fdfdfd;
}

.arrow {
    position: absolute;
    left: 1050px;
    top: 100px;
}
```
